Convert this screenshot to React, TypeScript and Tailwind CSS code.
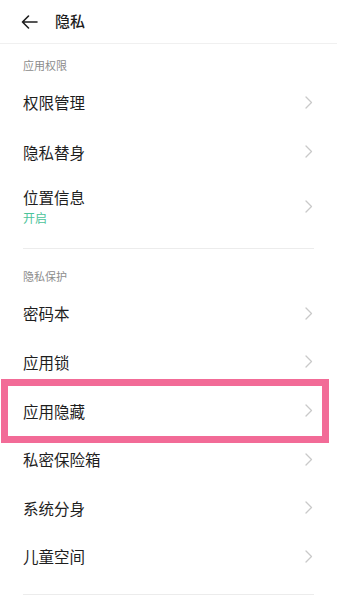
import type { ReactNode } from 'react';

const font = { fontFamily: '"Noto Sans CJK SC", "Noto Sans", sans-serif' };

function Chevron() {
  return (
    <svg width="8" height="13" viewBox="0 0 8 13" fill="none" className="shrink-0">
      <path d="M1 1l5.5 5.5L1 12" stroke="#c9c9c9" strokeWidth="1.3" strokeLinecap="round" strokeLinejoin="round" />
    </svg>
  );
}

function SectionLabel({ children, className }: { children: ReactNode; className: string }) {
  return <div className={`px-[23px] pb-[6px] text-[11px] leading-[14px] text-[#8c8c8c] ${className}`}>{children}</div>;
}

function Row({ title }: { title: string }) {
  return (
    <div className="flex h-[48.6px] items-center justify-between pl-[23px] pr-[24px]">
      <span className="text-[15.5px] leading-[22px] text-[#1e1e1e]">{title}</span>
      <Chevron />
    </div>
  );
}

export default function App() {
  return (
    <div className="min-h-[600px] w-[337px] overflow-hidden bg-white" style={font}>
      <header className="flex h-[44px] items-center border-b border-[#f0f0f0] pl-[21px]">
        <svg width="17" height="14" viewBox="0 0 17 14" fill="none">
          <path d="M16 7H1.5M7.5 1L1.5 7l6 6" stroke="#1e1e1e" strokeWidth="1.6" strokeLinecap="round" strokeLinejoin="round" />
        </svg>
        <h1 className="ml-[17px] text-[15px] font-medium text-[#1e1e1e]">隐私</h1>
      </header>

      <SectionLabel className="pt-[14px]">应用权限</SectionLabel>
      <div className="h-[49.5px]">
        <Row title="权限管理" />
      </div>
      <Row title="隐私替身" />
      <div className="flex h-[60px] items-center justify-between pl-[23px] pr-[24px]">
        <div className="flex flex-col gap-[2px]">
          <span className="text-[15.5px] leading-[22px] text-[#1e1e1e]">位置信息</span>
          <span className="text-[12px] leading-[16px] text-[#4cc39a]">开启</span>
        </div>
        <Chevron />
      </div>
      <div className="mx-[23px] mt-[12px] h-px bg-[#ececec]" />

      <SectionLabel className="pt-[20px]">隐私保护</SectionLabel>
      <Row title="密码本" />
      <Row title="应用锁" />
      <div className="relative">
        <Row title="应用隐藏" />
        <div className="pointer-events-none absolute -top-[7px] -bottom-[8px] left-[1px] right-[8px] border-[7px] border-[#f26b97]" />
      </div>
      <Row title="私密保险箱" />
      <Row title="系统分身" />
      <Row title="儿童空间" />
      <div className="mx-[23px] mt-[13px] h-px bg-[#ececec]" />
    </div>
  );
}
